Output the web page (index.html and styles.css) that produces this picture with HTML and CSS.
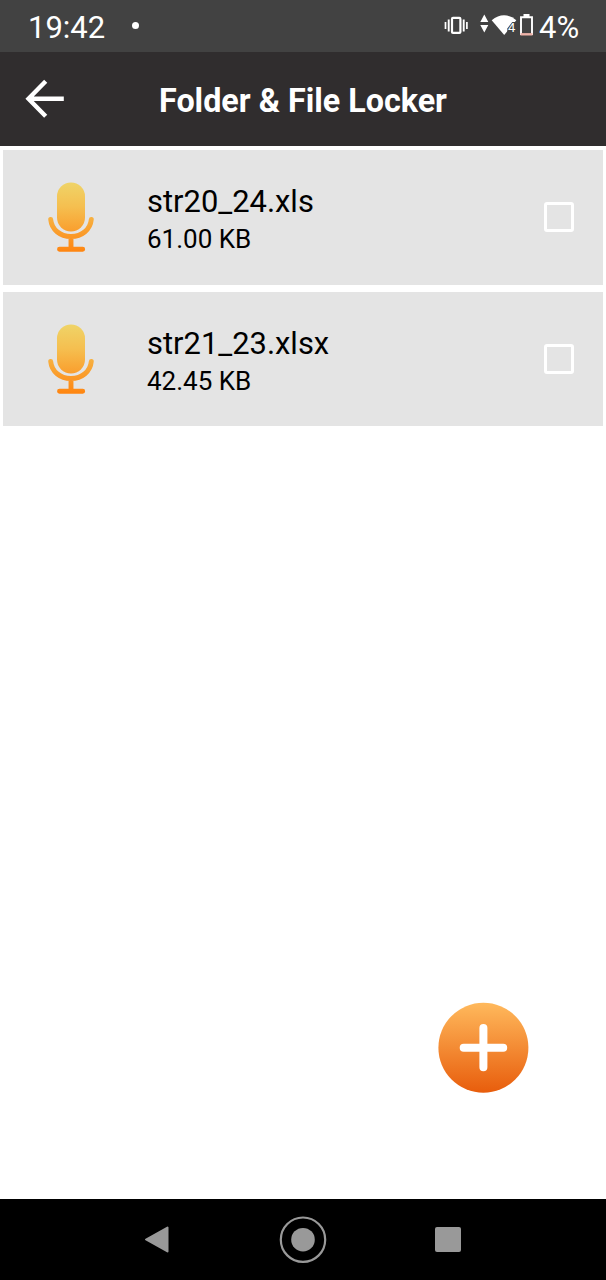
FILE: index.html
```html
<!DOCTYPE html>
<html lang="en">
<head>
<meta charset="utf-8">
<title>Folder &amp; File Locker</title>
<link rel="stylesheet" href="styles.css">
</head>
<body>
<div class="screen">
  <div class="status">
    <span class="clock">19:42</span>
    <span class="dot"></span>
    <svg class="status-icons" width="90" height="52" viewBox="0 0 90 52">
      <g fill="none" stroke="#fff">
        <rect x="8" y="17.900" width="8.400" height="15" rx="1" stroke-width="2.200"/>
        <path d="M4.700 19.500v12M19.700 19.500v12" stroke-width="1.900"/>
        <path d="M1.500 22v7M22.900 22v7" stroke-width="1.700"/>
      </g>
      <path d="M40.300 14.500l4 7.500h-8zM40.300 32.500l4-7.500h-8z" fill="#fff"/>
      <path d="M47.700 20.200Q60 10.500 72.300 20.200L60.200 35z" fill="#fff"/>
      <path d="M63.300 32V28.500l5-6.500h6v10z" fill="#424242"/>
      <text class="signal" x="64" y="31.800">4</text>
      <path d="M79.500 14h6v3h-6z" fill="#fff"/>
      <path d="M77 35V17.300h11V35" fill="none" stroke="#fff" stroke-width="1.900"/>
      <path d="M76.500 34.300h12" stroke="#efb3a9" stroke-width="2.400"/>
    </svg>
    <span class="battery">4%</span>
  </div>
  <header class="bar">
    <svg class="back" width="40" height="40" viewBox="0 0 40 40"><path d="M21.700 2.200L4.500 19.700 21.700 37.200M4.500 19.700H39.800" fill="none" stroke="#fff" stroke-width="4.400"/></svg>
    <h1 class="title">Folder &amp; File Locker</h1>
  </header>
  <main class="list">
    <div class="row">
      <svg class="mic" width="46" height="72" viewBox="0 0 46 72">
        <defs><linearGradient id="amber" gradientUnits="userSpaceOnUse" x1="0" y1="1" x2="0" y2="71"><stop offset="0" stop-color="#efd468"/><stop offset=".35" stop-color="#f5bf50"/><stop offset=".72" stop-color="#fa9d2c"/><stop offset="1" stop-color="#ff8510"/></linearGradient></defs>
        <rect x="9" y="1.500" width="28" height="49" rx="14" fill="url(#amber)"/>
        <path d="M2.700 38.500C3.700 48.500 12 55.500 23 55.500S42.300 48.500 43.300 38.500M23 56v12M11.500 68.300H34.700" fill="none" stroke="url(#amber)" stroke-width="4.900" stroke-linecap="round"/>
      </svg>
      <div class="info"><div class="name">str20_24.xls</div><div class="size">61.00 KB</div></div>
      <span class="check"></span>
    </div>
    <div class="row">
      <svg class="mic" width="46" height="72" viewBox="0 0 46 72">
        <rect x="9" y="1.500" width="28" height="49" rx="14" fill="url(#amber)"/>
        <path d="M2.700 38.500C3.700 48.500 12 55.500 23 55.500S42.300 48.500 43.300 38.500M23 56v12M11.500 68.300H34.700" fill="none" stroke="url(#amber)" stroke-width="4.900" stroke-linecap="round"/>
      </svg>
      <div class="info"><div class="name">str21_23.xlsx</div><div class="size">42.45 KB</div></div>
      <span class="check"></span>
    </div>
  </main>
  <svg class="add" width="92" height="92" viewBox="0 0 92 92">
    <defs><linearGradient id="orange" x1="0" y1="0" x2="0" y2="1"><stop offset="0" stop-color="#ffb95c"/><stop offset="1" stop-color="#e85d0c"/></linearGradient></defs>
    <circle cx="46.400" cy="45.700" r="45" fill="url(#orange)"/>
    <path d="M46.400 26v39.300M26.700 45.700h39.500" stroke="#fff" stroke-width="8" stroke-linecap="round"/>
  </svg>
  <nav class="nav">
    <svg width="26" height="30" viewBox="0 0 26 30"><path d="M2 14.500L23.500 2.500V26.500z" fill="#999" stroke="#999" stroke-width="2" stroke-linejoin="round"/></svg>
    <svg width="48" height="48" viewBox="0 0 48 48"><circle cx="24" cy="23.700" r="22.200" fill="none" stroke="#999" stroke-width="2.200"/><circle cx="24" cy="23.700" r="11.800" fill="#999"/></svg>
    <span class="recent"></span>
  </nav>
</div>
</body>
</html>
```
FILE: styles.css
```css
* { box-sizing: border-box; }
body { margin: 0; background: #fff; font-family: Roboto, sans-serif; }
svg { display: block; flex: none; }
.screen { width: 606px; height: 1280px; display: flex; flex-direction: column; }
.status { height: 52px; background: #424242; color: #fff; display: flex; align-items: center; padding-left: 28px; font-size: 31px; line-height: 52px; }
.clock { flex: none; width: 104px; padding-top: 3px; }
.dot { flex: none; width: 7px; height: 7px; margin-bottom: 1px; border-radius: 50%; background: #fff; }
.status-icons { margin-left: 305px; }
.signal { font-size: 13px; fill: #fff; }
.battery { flex: none; margin-left: 5px; padding-top: 3px; }
.bar { height: 94px; background: #302d2e; display: flex; align-items: center; padding-left: 24px; }
.title { margin: 4px 0 0 95px; font-size: 32.300px; line-height: 40px; font-weight: 700; color: #fff; white-space: nowrap; }
.list { flex: 1; display: flex; flex-direction: column; gap: 7px; padding: 4px 3px 0; }
.row { height: 134.500px; background: #e4e4e4; display: flex; align-items: center; padding: 0 29px 0 45px; }
.info { margin-left: 53px; flex: 1; padding-top: 5px; color: #000; white-space: nowrap; }
.name { font-size: 30.900px; line-height: 39px; }
.size { font-size: 26px; line-height: 36px; }
.check { width: 30px; height: 30px; border: 3px solid #fff; border-radius: 3px; }
.add { align-self: flex-end; margin: 0 77px 105px 0; }
.nav { height: 81px; background: #000; display: flex; align-items: center; justify-content: space-between; padding: 0 145px 0 144px; }
.recent { width: 26px; height: 25px; border-radius: 2px; background: #999; }
```
